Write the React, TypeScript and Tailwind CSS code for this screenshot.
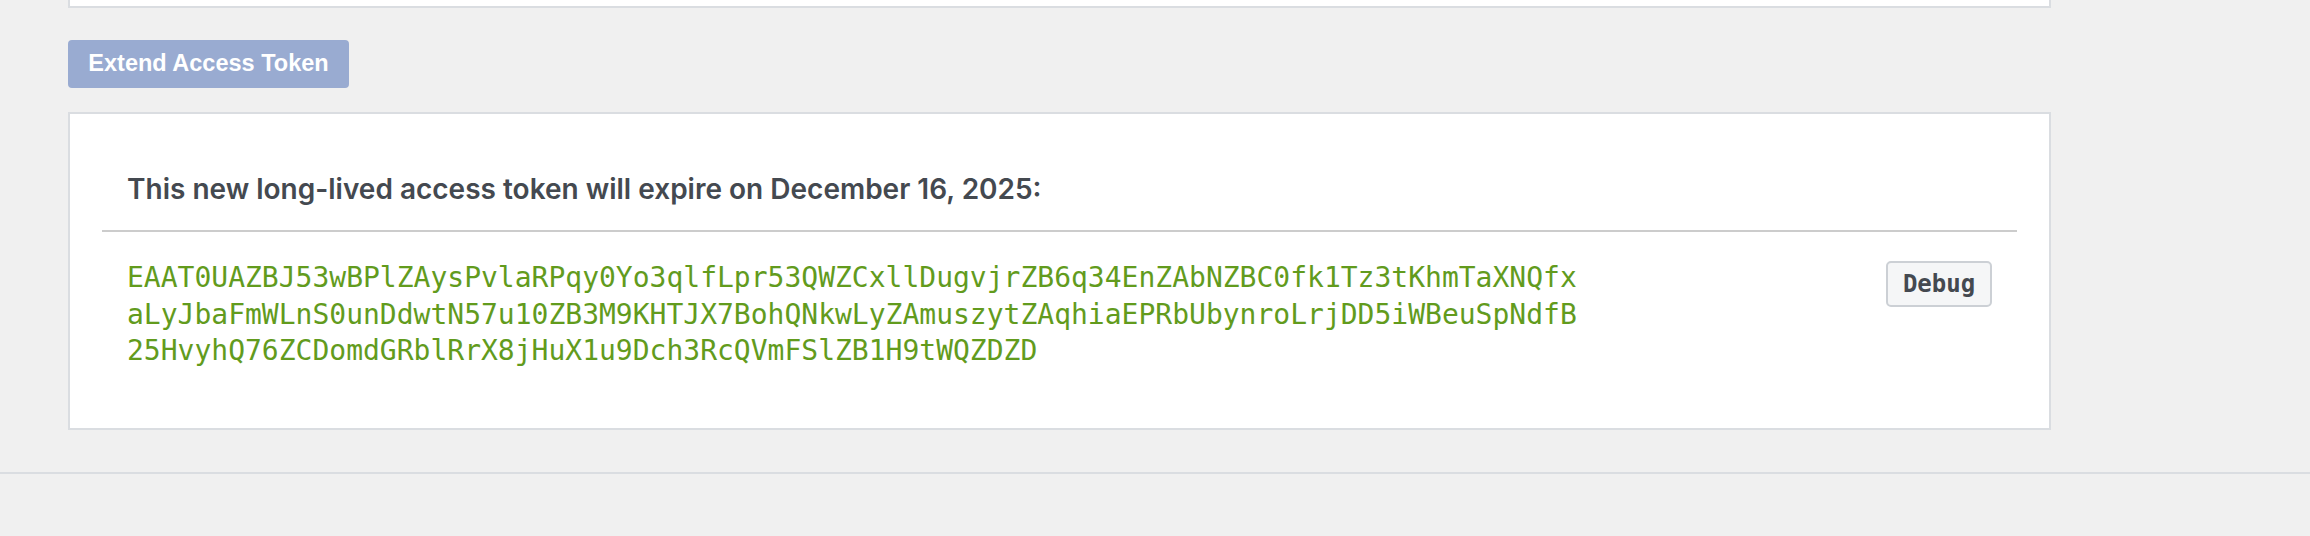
import React from "react";

const TOKEN = [
  "EAAT0UAZBJ53wBPlZAysPvlaRPqy0Yo3qlfLpr53QWZCxllDugvjrZB6q34EnZAbNZBC0fk1Tz3tKhmTaXNQfx",
  "aLyJbaFmWLnS0unDdwtN57u10ZB3M9KHTJX7BohQNkwLyZAmuszytZAqhiaEPRbUbynroLrjDD5iWBeuSpNdfB",
  "25HvyhQ76ZCDomdGRblRrX8jHuX1u9Dch3RcQVmFSlZB1H9tWQZDZD",
];

export default function App() {
  return (
    <div className="w-[2310px] h-[536px] bg-[#f0f0f0] overflow-hidden flex flex-col">
      <div className="ml-[68px] w-[1983px] flex flex-col">
        <div className="h-[8px] bg-white border-x-2 border-b-2 border-[#dadde1]" />
        <div className="mt-[32px]">
          <button
            className="h-[48px] w-[281px] rounded-[4px] bg-[#99abd1] text-white font-bold text-[23.5px] leading-none flex items-center justify-center"
            style={{ fontFamily: '"Liberation Sans", Arial, sans-serif' }}
          >
            Extend Access Token
          </button>
        </div>
        <div className="mt-[24px] h-[318px] bg-white border-2 border-[#dadde1] px-[32px] pt-[59px]">
          <div
            className="px-[25px] text-[28px] leading-[33px] font-semibold text-[#444950]"
            style={{ fontFamily: 'Inter, "Noto Sans", sans-serif' }}
          >
            This new long-lived access token will expire on December 16, 2025:
          </div>
          <div className="mt-[24px] h-[2px] bg-[#cccccc]" />
          <div className="mt-[28px] px-[25px] flex items-start justify-between">
            <div
              className="text-[28px] leading-[36.5px] text-[#629b1d]"
              style={{ fontFamily: '"DejaVu Sans Mono", monospace' }}
            >
              {TOKEN.map((l) => (
                <div key={l}>{l}</div>
              ))}
            </div>
            <button
              className="mt-[1px] h-[46px] w-[106px] rounded-[5px] border-2 border-[#ccd0d5] bg-[#f5f6f7] text-[#444950] font-bold text-[24px] leading-none flex items-center justify-center"
              style={{ fontFamily: '"DejaVu Sans Mono", monospace' }}
            >
              Debug
            </button>
          </div>
        </div>
      </div>
      <div className="mt-[42px] h-[2px] w-full bg-[#dadde1]" />
    </div>
  );
}
